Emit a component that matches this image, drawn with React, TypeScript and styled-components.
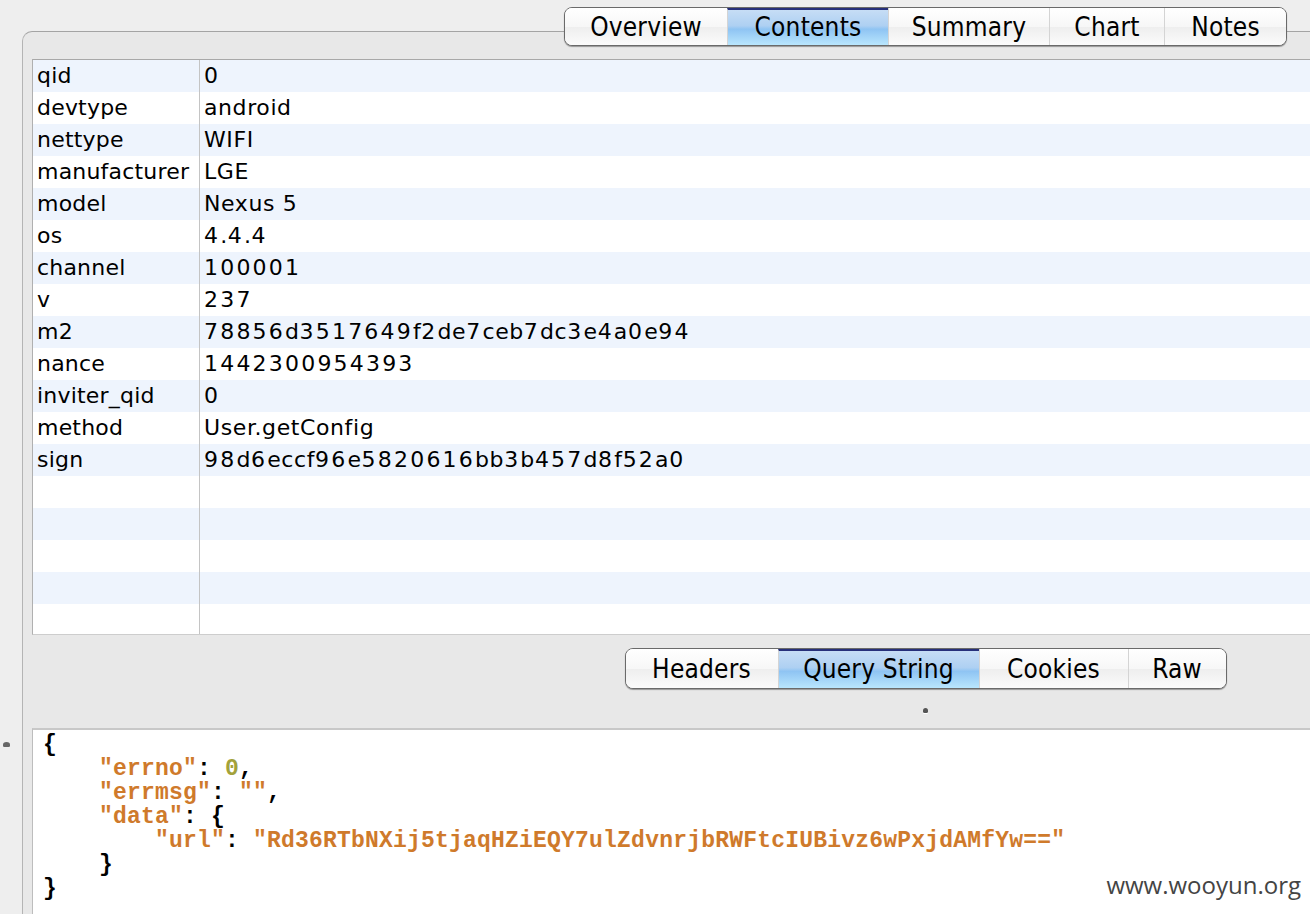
import React from 'react';
import styled, { createGlobalStyle } from 'styled-components';

const Global = createGlobalStyle`
  html, body { margin: 0; padding: 0; background: #eeeeee; }
  body { width: 1310px; height: 914px; overflow: hidden; }
`;

const Screen = styled.div`
  position: relative;
  width: 1310px;
  height: 914px;
  overflow: hidden;
  background: #eeeeee;
  padding: 31px 0 0 22px;
  box-sizing: border-box;
`;

const Panel = styled.div`
  width: 1806px;
  height: 883px;
  box-sizing: border-box;
  border-top: 1px solid #a4a4a4;
  border-left: 1px solid #b4b4b4;
  border-top-left-radius: 10px;
  background: #e8e8e8;
  padding-left: 9px;
  display: flex;
  flex-direction: column;
`;

const Header = styled.div`
  height: 27px;
  flex: none;
  display: flex;
  justify-content: center;
  align-items: flex-start;
  padding-right: 9px;
`;

const Segmented = styled.div<{ $top: number }>`
  margin-top: ${p => p.$top}px;
  display: flex;
  border: 1px solid #6a6a6a;
  border-radius: 8px;
  overflow: hidden;
  box-shadow: 0 1px 1px rgba(0, 0, 0, 0.35);
  background: #fff;
`;

const Segment = styled.div<{ $w: number; $h: number; $active?: boolean }>`
  width: ${p => p.$w}px;
  height: ${p => p.$h}px;
  box-sizing: border-box;
  display: flex;
  align-items: center;
  justify-content: center;
  font-family: "DejaVu Sans Condensed", "DejaVu Sans", sans-serif;
  font-stretch: condensed;
  font-size: 26px;
  letter-spacing: 0.2px;
  color: #000;
  border-left: 1px solid #d4d4d4;
  &:first-child { border-left: none; }
  background: ${p =>
    p.$active
      ? 'linear-gradient(to bottom, #c6ddf5 0%, #aed0f2 45%, #8fc4f3 55%, #b9e6fd 100%)'
      : 'linear-gradient(to bottom, #ffffff 0%, #f7f7f7 50%, #eeeeee 51%, #fbfbfb 100%)'};
  ${p => (p.$active ? 'border-top: 2px solid #27307a; padding-bottom: 2px;' : '')}
`;

const Table = styled.div`
  height: 576px;
  flex: none;
  border-top: 1px solid #a8a8a8;
  border-left: 1px solid #b0b0b0;
  border-bottom: 1px solid #cdcdcd;
  box-sizing: border-box;
  background: #fff;
  overflow: hidden;
  display: flex;
  flex-direction: column;
`;

const Row = styled.div<{ $alt: boolean }>`
  display: grid;
  grid-template-columns: 167px 1fr;
  height: 32px;
  flex: none;
  background: ${p => (p.$alt ? '#eef4fd' : '#ffffff')};
`;

const Cell = styled.div<{ $first?: boolean }>`
  font-family: "DejaVu Sans", sans-serif;
  font-size: 22px;
  line-height: 32px;
  color: #000;
  padding-left: 4px;
  white-space: nowrap;
  letter-spacing: ${p => (p.$first ? '0.2px' : '0.6px')};
  ${p => (p.$first ? 'border-right: 1px solid #c4c4c4;' : '')}
`;

const Digits = styled.span`
  letter-spacing: 2.2px;
`;

const Band = styled.div`
  height: 93px;
  flex: none;
  display: flex;
  flex-direction: column;
  align-items: center;
  padding-right: 9px;
`;

const Grip = styled.div`
  width: 5px;
  height: 5px;
  margin-top: 19px;
  border-radius: 50% 50% 30% 30%;
  background: #555;
  box-shadow: 0 1px 0 #fff;
`;

const TextView = styled.div`
  flex: 1;
  background: #fff;
  border-top: 2px solid #c8c8c8;
  border-left: 1px solid #bdbdbd;
  padding: 3px 10px;
  box-sizing: border-box;
`;

const Code = styled.pre`
  margin: 0;
  font-family: "Liberation Mono", "Courier New", monospace;
  font-weight: bold;
  font-size: 23px;
  letter-spacing: 0.2px;
  line-height: 24px;
  color: #000;
`;

const Str = styled.span`
  color: #cf7a2b;
`;

const Num = styled.span`
  color: #a3a23a;
`;

const Watermark = styled.div`
  position: absolute;
  right: 9px;
  bottom: 13px;
  font-family: "Open Sans", sans-serif;
  font-size: 24px;
  color: #444;
`;

const SideGrip = styled.div`
  position: absolute;
  left: 3px;
  top: 742px;
  width: 7px;
  height: 5px;
  border-radius: 50% 50% 20% 20%;
  background: #666;
`;

const rows: [string, string][] = [
  ['qid', '0'],
  ['devtype', 'android'],
  ['nettype', 'WIFI'],
  ['manufacturer', 'LGE'],
  ['model', 'Nexus 5'],
  ['os', '4.4.4'],
  ['channel', '100001'],
  ['v', '237'],
  ['m2', '78856d3517649f2de7ceb7dc3e4a0e94'],
  ['nance', '1442300954393'],
  ['inviter_qid', '0'],
  ['method', 'User.getConfig'],
  ['sign', '98d6eccf96e5820616bb3b457d8f52a0'],
  ['', ''],
  ['', ''],
  ['', ''],
  ['', ''],
  ['', ''],
];

const topTabs: [string, number][] = [
  ['Overview', 162],
  ['Contents', 161],
  ['Summary', 161],
  ['Chart', 115],
  ['Notes', 122],
];

const bottomTabs: [string, number][] = [
  ['Headers', 152],
  ['Query String', 201],
  ['Cookies', 149],
  ['Raw', 98],
];

function Value({ text }: { text: string }) {
  const parts = text.split(/(\d+)/).filter(s => s !== '');
  return (
    <>
      {parts.map((p, i) => (/^\d+$/.test(p) ? <Digits key={i}>{p}</Digits> : <span key={i}>{p}</span>))}
    </>
  );
}

export default function App() {
  return (
    <>
      <Global />
      <Screen>
        <Panel>
          <Header>
            <Segmented $top={-25}>
              {topTabs.map(([t, w]) => (
                <Segment key={t} $w={w} $h={37} $active={t === 'Contents'}>
                  {t}
                </Segment>
              ))}
            </Segmented>
          </Header>
          <Table>
            {rows.map(([k, v], i) => (
              <Row key={i} $alt={i % 2 === 0}>
                <Cell $first>{k}</Cell>
                <Cell>
                  <Value text={v} />
                </Cell>
              </Row>
            ))}
          </Table>
          <Band>
            <Segmented $top={13}>
              {bottomTabs.map(([t, w]) => (
                <Segment key={t} $w={w} $h={39} $active={t === 'Query String'}>
                  {t}
                </Segment>
              ))}
            </Segmented>
            <Grip />
          </Band>
          <TextView>
            <Code>
              {'{\n    '}
              <Str>"errno"</Str>
              {': '}
              <Num>0</Num>
              {',\n    '}
              <Str>"errmsg"</Str>
              {': '}
              <Str>""</Str>
              {',\n    '}
              <Str>"data"</Str>
              {': {\n        '}
              <Str>"url"</Str>
              {': '}
              <Str>"Rd36RTbNXij5tjaqHZiEQY7ulZdvnrjbRWFtcIUBivz6wPxjdAMfYw=="</Str>
              {'\n    }\n}'}
            </Code>
          </TextView>
        </Panel>
        <SideGrip />
        <Watermark>www.wooyun.org</Watermark>
      </Screen>
    </>
  );
}
